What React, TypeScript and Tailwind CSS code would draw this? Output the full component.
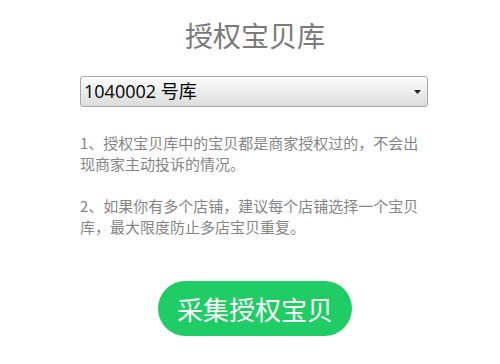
export default function App() {
  return (
    <div
      className="w-[500px] h-[364px] bg-white overflow-hidden"
      style={{ fontFamily: '"Noto Sans CJK SC", "Noto Sans", sans-serif' }}
    >
      <div className="ml-[80px] w-[350px] flex flex-col">
        <h1 className="mt-[15px] text-center text-[28px] leading-[40px] text-[#7a7a7a] font-normal">授权宝贝库</h1>
        <div className="mt-[21px] h-[31px] w-[348px] rounded-[3px] border border-[#a9a9a9] bg-gradient-to-b from-[#fdfdfd] to-[#dcdcdc] flex items-center justify-between pl-[3px] pr-[6px] shadow-[inset_0_1px_0_#fff]">
          <span className="text-[18px] text-black" style={{ fontFamily: '"Open Sans", "Noto Sans CJK SC", sans-serif' }}>
            1040002 号库
          </span>
          <svg width="7" height="4" viewBox="0 0 7 4">
            <path d="M0 0h7L3.5 4z" fill="#222" />
          </svg>
        </div>
        <div className="mt-[25px] text-[15px] leading-[21px] text-[#858585]">
          <p>1、授权宝贝库中的宝贝都是商家授权过的，不会出现商家主动投诉的情况。</p>
          <p className="mt-[21px]">2、如果你有多个店铺，建议每个店铺选择一个宝贝库，最大限度防止多店宝贝重复。</p>
        </div>
        <div className="mt-[44px] flex justify-center">
          <button className="w-[194px] h-[55px] rounded-full bg-[#20cc66] text-white text-[26px] leading-none">
            采集授权宝贝
          </button>
        </div>
      </div>
    </div>
  );
}
